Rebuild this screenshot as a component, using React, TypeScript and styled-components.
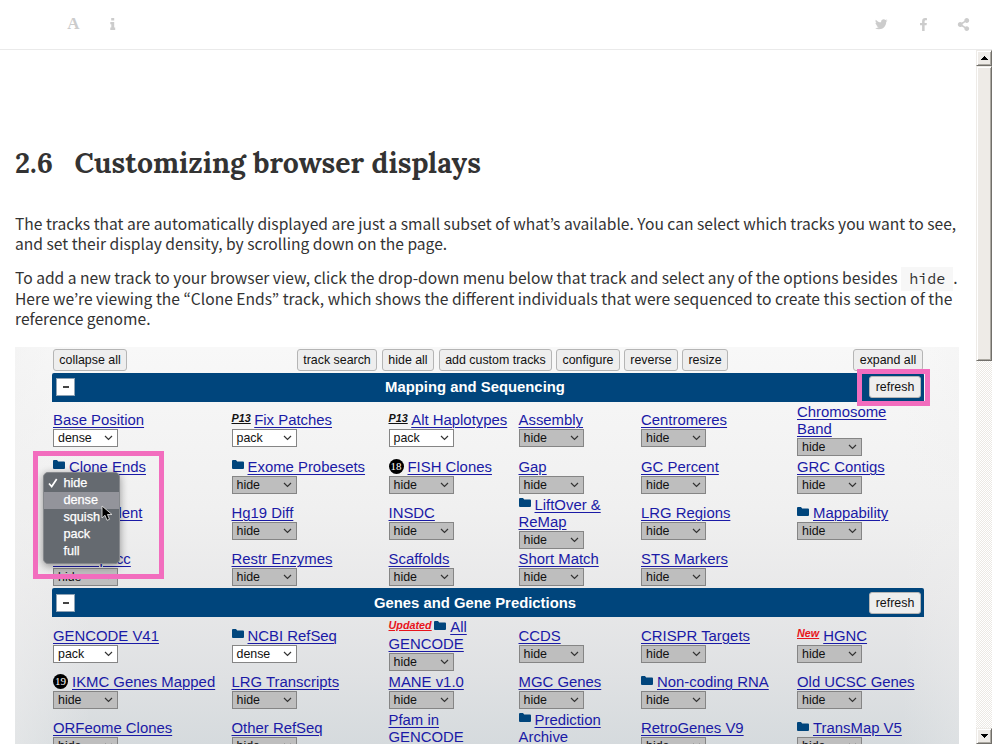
import React from "react";
import styled, { createGlobalStyle } from "styled-components";
import { FaTwitter, FaFacebookF, FaShareAlt } from "react-icons/fa";

const GlobalStyle = createGlobalStyle`
  * { box-sizing: border-box; }
  body { margin: 0; background: #fff; overflow: hidden; }
`;

const Page = styled.div`
  display: flex;
  flex-direction: column;
  width: 992px;
  height: 744px;
  overflow: hidden;
  color: #333;
  font-family: "Noto Sans CJK KR", "Noto Sans", sans-serif;
`;

const Toolbar = styled.header`
  display: flex;
  justify-content: space-between;
  flex: none;
  height: 50px;
  padding: 0 9px 0 53px;
  border-bottom: 1px solid #eaeaea;
  color: #ccc;
`;

const ToolGroup = styled.div`
  display: flex;
`;

const ToolButton = styled.a<{ $width: number }>`
  display: flex;
  align-items: center;
  justify-content: center;
  width: ${(p) => p.$width}px;
  height: 48px;
  font: bold 17px "Liberation Serif", serif;
`;

const Body = styled.div`
  display: flex;
  flex: 1;
  min-height: 0;
`;

const Content = styled.main`
  flex: 1;
  min-width: 0;
  padding: 92px 17px 0 15px;
  overflow: hidden;
`;

const Heading = styled.h2`
  display: flex;
  gap: 21.6px;
  margin: 0 0 30.3px;
  height: 40.5px;
  font: bold 28.3px/42px "Lora", "Liberation Serif", serif;
  white-space: nowrap;
`;

const Paragraph = styled.p`
  margin: 0 0 13.6px;
  font-size: 15.62px;
  line-height: 20.4px;
  white-space: nowrap;
`;

const Line = styled.span`
  display: block;
  height: 20.4px;
`;

const Code = styled.code`
  display: inline-block;
  height: 24px;
  margin: -4px 0 -2px;
  padding: 0 8px;
  background: #f7f7f7;
  font: 15px/23px "Source Code Pro", "DejaVu Sans Mono", monospace;
  vertical-align: middle;
`;

const Figure = styled.figure`
  position: relative;
  width: 944px;
  height: 480px;
  margin: 18.2px 0 0;
  padding: 2.4px 0 0 37px;
  background:
    linear-gradient(90deg, rgba(240, 240, 240, 0.5), rgba(240, 240, 240, 0) 8%, rgba(240, 240, 240, 0) 94%, rgba(240, 240, 240, 0.3)),
    linear-gradient(#f8f8f8 0, #f0f0f0 160px, #e8e8e9 250px, #dfe1e3 330px, #d5dadd 400px);
  font-family: "Liberation Sans", Arial, sans-serif;
  color: #111;
`;

const Controls = styled.div`
  display: flex;
  align-items: center;
  width: 872px;
  height: 22px;
  padding-left: 1px;
`;

const Button = styled.span<{ $width: number; $gap?: number }>`
  flex: none;
  width: ${(p) => p.$width}px;
  height: 22px;
  margin-left: ${(p) => p.$gap ?? 0}px;
  border: 1px solid #b5b5b5;
  border-radius: 3px;
  background: #eee;
  font-size: 12.4px;
  line-height: 20px;
  text-align: center;
  white-space: nowrap;
`;

const GroupHeader = styled.div`
  display: flex;
  align-items: center;
  width: 872px;
  height: 29px;
  padding: 0 3px 0 4px;
  border-radius: 2px 2px 0 0;
  background: #00457c;
`;

const Section = styled.section<{ $top: number }>`
  margin-top: ${(p) => p.$top}px;
`;

const CollapseBox = styled.span`
  display: flex;
  align-items: center;
  justify-content: center;
  width: 19px;
  height: 18px;
  border: 1px solid #8fa3b5;
  background: #fff;

  &::after {
    content: "";
    width: 6px;
    height: 2px;
    background: #444;
  }
`;

const GroupTitle = styled.span`
  flex: 1;
  padding-left: 6px;
  color: #fff;
  font-size: 14.85px;
  font-weight: bold;
  text-align: center;
`;

const TrackGrid = styled.div`
  display: grid;
  grid-template-columns: 178.5px 157px 130px 122.5px 156px 150px;
  grid-auto-rows: 46.3px;
  align-items: center;
  height: 186.4px;
  padding: 4.9px 0 0 1px;
`;

const Cell = styled.div`
  font-size: 14.9px;
  line-height: 17px;
  white-space: nowrap;
`;

const LabelLine = styled.div`
  display: flex;
  height: 17px;
`;

const Link = styled.a`
  color: #1a1aa6;
  text-decoration: underline;
  text-decoration-thickness: 1px;
  text-underline-offset: 2px;
`;

const Tag = styled.em<{ $color: string; $gap: number }>`
  margin: -2.5px ${(p) => p.$gap}px 0 0;
  color: ${(p) => p.$color};
  font-size: 10.8px;
  font-weight: bold;
  text-decoration: underline;
`;

const FolderSvg = styled.svg`
  flex: none;
  width: 12px;
  height: 10px;
  margin: 1.5px 4px 0 0;
  fill: #00457c;
`;

const Count = styled.span`
  flex: none;
  width: 15px;
  height: 15px;
  margin: 0 4px 0 0;
  border-radius: 50%;
  background: #000;
  color: #fff;
  font: 11px/15px "Liberation Serif", serif;
  text-align: center;
`;

const SelectBox = styled.div<{ $active: boolean }>`
  display: flex;
  align-items: center;
  justify-content: space-between;
  width: 65px;
  height: 18px;
  padding: 0 4px;
  border: 1px solid #858585;
  background: ${(p) => (p.$active ? "#fff" : "#bebebe")};
  font-size: 12.4px;
  line-height: 16px;
`;

const Highlight = styled.div<{ $x: number; $y: number; $w: number; $h: number }>`
  position: absolute;
  left: ${(p) => p.$x}px;
  top: ${(p) => p.$y}px;
  width: ${(p) => p.$w}px;
  height: ${(p) => p.$h}px;
  border: 5px solid #f26dbe;
`;

const Menu = styled.div`
  position: absolute;
  left: 28.4px;
  top: 125px;
  width: 77px;
  height: 92px;
  padding: 2.5px 0;
  border: 1px solid #85888c;
  border-radius: 5px;
  background: #656a70;
  box-shadow: 0 2px 8px rgba(0, 0, 0, 0.4);
  color: #fff;
  font-size: 12.7px;
`;

const MenuItem = styled.div<{ $hover?: boolean }>`
  display: flex;
  align-items: center;
  height: 16.8px;
  background: ${(p) => (p.$hover ? "#93949b" : "transparent")};
  -webkit-text-stroke: 0.25px #fff;
`;

const MenuCheck = styled.span`
  display: flex;
  width: 19px;
  padding-left: 4px;
`;

const Cursor = styled.svg`
  position: absolute;
  left: 86px;
  top: 158px;
  width: 12px;
  height: 17px;
`;

const Scrollbar = styled.div`
  display: flex;
  flex-direction: column;
  flex: none;
  width: 16px;
  background: repeating-conic-gradient(#ece9e4 0 25%, #fff 0 50%) 0 0 / 2px 2px;
`;

const ScrollPart = styled.div<{ $height: number }>`
  display: flex;
  align-items: center;
  justify-content: center;
  flex: none;
  height: ${(p) => p.$height}px;
  background: #eeebe7;
  border: 1px solid;
  border-color: #eeebe7 #716f6a #716f6a #eeebe7;
  box-shadow: inset 1px 1px #fff, inset -1px -1px #aca9a2;
`;

const Spacer = styled.div`
  flex: 1;
`;

const Folder = () => (
  <FolderSvg viewBox="0 0 12 10">
    <path d="M0 1q0-1 1-1h3l1.2 1.5H11q1 0 1 1V8q0 1-1 1H1Q0 9 0 8z" />
  </FolderSvg>
);

type Track = {
  lines: string[];
  value?: string;
  mark?: "folder" | "p13" | "new" | "updated" | "18" | "19";
};

const mapping: (Track | null)[] = [
  { lines: ["Base Position"], value: "dense" },
  { lines: ["Fix Patches"], value: "pack", mark: "p13" },
  { lines: ["Alt Haplotypes"], value: "pack", mark: "p13" },
  { lines: ["Assembly"] },
  { lines: ["Centromeres"] },
  { lines: ["Chromosome", "Band"] },
  { lines: ["Clone Ends"], mark: "folder" },
  { lines: ["Exome Probesets"], mark: "folder" },
  { lines: ["FISH Clones"], mark: "18" },
  { lines: ["Gap"] },
  { lines: ["GC Percent"] },
  { lines: ["GRC Contigs"] },
  { lines: ["GRC Incident"] },
  { lines: ["Hg19 Diff"] },
  { lines: ["INSDC"] },
  { lines: ["LiftOver &", "ReMap"], mark: "folder" },
  { lines: ["LRG Regions"] },
  { lines: ["Mappability"], mark: "folder" },
  { lines: ["RefSeq Acc"] },
  { lines: ["Restr Enzymes"] },
  { lines: ["Scaffolds"] },
  { lines: ["Short Match"] },
  { lines: ["STS Markers"] },
  null,
];

const genes: (Track | null)[] = [
  { lines: ["GENCODE V41"], value: "pack" },
  { lines: ["NCBI RefSeq"], value: "dense", mark: "folder" },
  { lines: ["All", "GENCODE"], mark: "updated" },
  { lines: ["CCDS"] },
  { lines: ["CRISPR Targets"] },
  { lines: ["HGNC"], mark: "new" },
  { lines: ["IKMC Genes Mapped"], mark: "19" },
  { lines: ["LRG Transcripts"] },
  { lines: ["MANE v1.0"] },
  { lines: ["MGC Genes"] },
  { lines: ["Non-coding RNA"], mark: "folder" },
  { lines: ["Old UCSC Genes"] },
  { lines: ["ORFeome Clones"] },
  { lines: ["Other RefSeq"] },
  { lines: ["Pfam in", "GENCODE"] },
  { lines: ["Prediction", "Archive"], mark: "folder" },
  { lines: ["RetroGenes V9"] },
  { lines: ["TransMap V5"], mark: "folder" },
];

const Mark = ({ kind }: { kind?: Track["mark"] }) => {
  switch (kind) {
    case "folder":
      return <Folder />;
    case "p13":
      return <Tag $color="#111" $gap={3.5}>P13</Tag>;
    case "new":
      return <Tag $color="#e8141c" $gap={4}>New</Tag>;
    case "updated":
      return (
        <>
          <Tag $color="#e8141c" $gap={2.5}>Updated</Tag>
          <Folder />
        </>
      );
    case "18":
    case "19":
      return <Count>{kind}</Count>;
    default:
      return null;
  }
};

const Select = ({ value = "hide" }: { value?: string }) => (
  <SelectBox $active={value !== "hide"}>
    {value}
    <svg width="9" height="6" viewBox="0 0 9 6" fill="none" stroke="#333" strokeWidth="1.2">
      <path d="M1 1l3.5 3.5L8 1" />
    </svg>
  </SelectBox>
);

const Tracks = ({ items }: { items: (Track | null)[] }) => (
  <TrackGrid>
    {items.map((t, i) => (
      <Cell key={i}>
        {t && (
          <>
            {t.lines.map((line, n) => (
              <LabelLine key={line}>
                {n === 0 && <Mark kind={t.mark} />}
                <Link>{line}</Link>
              </LabelLine>
            ))}
            <Select value={t.value} />
          </>
        )}
      </Cell>
    ))}
  </TrackGrid>
);

const Group = ({ title, items, top }: { title: string; items: (Track | null)[]; top: number }) => (
  <Section $top={top}>
    <GroupHeader>
      <CollapseBox />
      <GroupTitle>{title}</GroupTitle>
      <Button $width={52}>refresh</Button>
    </GroupHeader>
    <Tracks items={items} />
  </Section>
);

export default function App() {
  return (
    <Page>
      <GlobalStyle />
      <Toolbar>
        <ToolGroup>
          <ToolButton $width={41}>A</ToolButton>
          <ToolButton $width={37}>
            <svg width="6" height="12" viewBox="0 0 6 12" fill="#ccc">
              <path d="M1.2 0h3v2.6h-3zM.3 4h3.9v5.6h1V12H.3V9.6h1V6.3h-1z" />
            </svg>
          </ToolButton>
        </ToolGroup>
        <ToolGroup>
          <ToolButton $width={43}><FaTwitter size={12.5} /></ToolButton>
          <ToolButton $width={41}><FaFacebookF size={13} /></ToolButton>
          <ToolButton $width={39}><FaShareAlt size={13} /></ToolButton>
        </ToolGroup>
      </Toolbar>
      <Body>
        <Content>
          <Heading>
            <span>2.6</span>
            <span>Customizing browser displays</span>
          </Heading>
          <Paragraph>
            <Line>The tracks that are automatically displayed are just a small subset of what’s available. You can select which tracks you want to see,</Line>
            <Line>and set their display density, by scrolling down on the page.</Line>
          </Paragraph>
          <Paragraph>
            <Line>To add a new track to your browser view, click the drop-down menu below that track and select any of the options besides <Code>hide</Code>.</Line>
            <Line>Here we’re viewing the “Clone Ends” track, which shows the different individuals that were sequenced to create this section of the</Line>
            <Line>reference genome.</Line>
          </Paragraph>
          <Figure>
            <Controls>
              <Button $width={74}>collapse all</Button>
              <Button $width={80} $gap={170}>track search</Button>
              <Button $width={52} $gap={5}>hide all</Button>
              <Button $width={113} $gap={5}>add custom tracks</Button>
              <Button $width={64} $gap={4}>configure</Button>
              <Button $width={54} $gap={4}>reverse</Button>
              <Button $width={46} $gap={4}>resize</Button>
              <Button $width={70} $gap={125}>expand all</Button>
            </Controls>
            <Group title="Mapping and Sequencing" items={mapping} top={2} />
            <Group title="Genes and Gene Predictions" items={genes} top={0} />
            <Menu>
              {["hide", "dense", "squish", "pack", "full"].map((name) => (
                <MenuItem key={name} $hover={name === "dense"}>
                  <MenuCheck>
                    {name === "hide" && (
                      <svg width="10" height="10" viewBox="0 0 10 10" fill="none" stroke="#fff" strokeWidth="1.7">
                        <path d="M1 5.5l2.7 3L8.7 1" />
                      </svg>
                    )}
                  </MenuCheck>
                  {name}
                </MenuItem>
              ))}
            </Menu>
            <Highlight $x={18} $y={104} $w={131} $h={128} />
            <Highlight $x={842} $y={22.5} $w={73} $h={37} />
            <Cursor viewBox="0 0 12 17">
              <path d="M1 1v12l3-2.7 2 5 2.5-1-2-4.8H11z" fill="#000" stroke="#ddd" strokeWidth=".9" />
            </Cursor>
          </Figure>
        </Content>
        <Scrollbar>
          <ScrollPart $height={16}>
            <svg width="7" height="4" shapeRendering="crispEdges"><path d="M3 0h1v1h1v1h1v1h1v1H0V3h1V2h1V1h1z" /></svg>
          </ScrollPart>
          <ScrollPart $height={295} />
          <Spacer />
          <ScrollPart $height={16}>
            <svg width="7" height="4" shapeRendering="crispEdges"><path d="M0 0h7v1H6v1H5v1H4v1H3V3H2V2H1V1H0z" /></svg>
          </ScrollPart>
        </Scrollbar>
      </Body>
    </Page>
  );
}
